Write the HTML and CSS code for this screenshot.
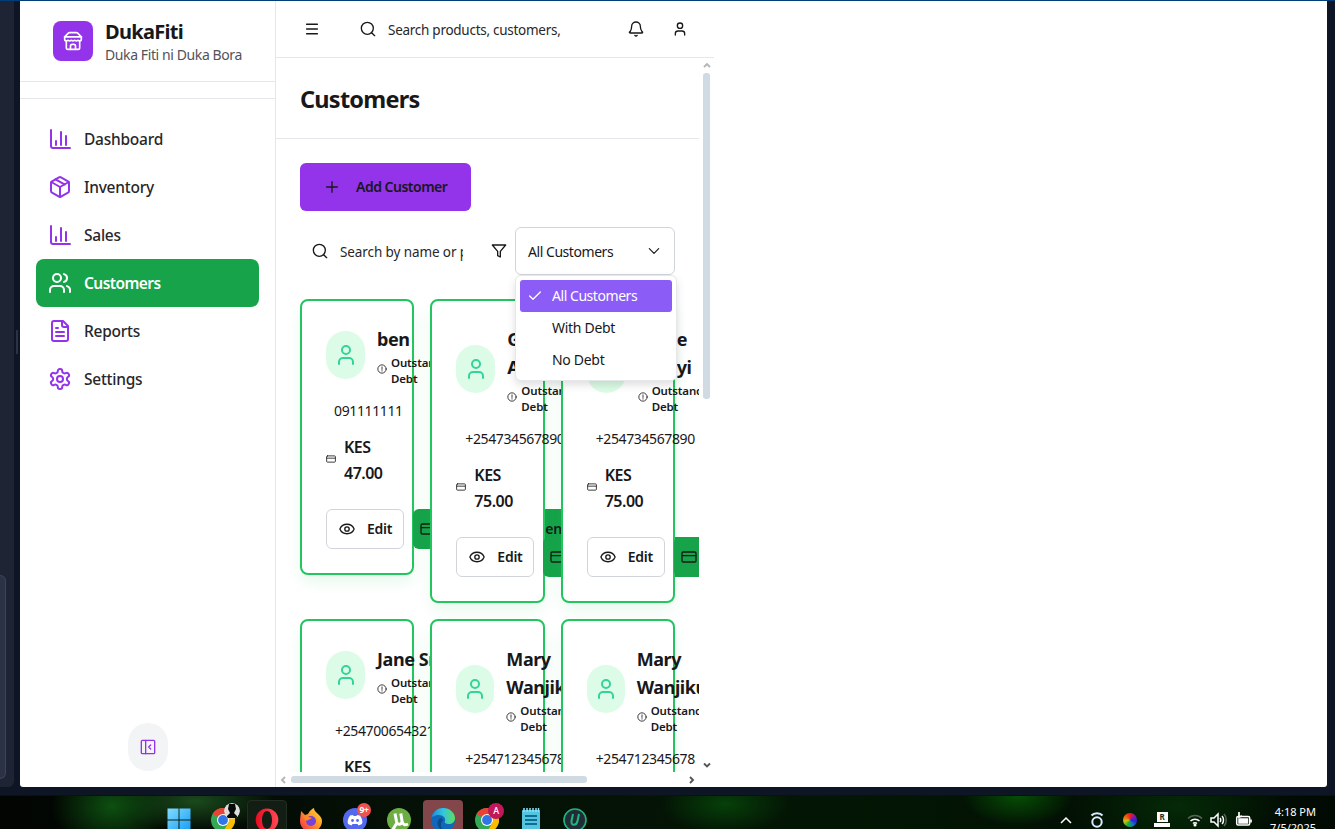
FILE: index.html
```
<!DOCTYPE html>
<html lang="en">
<head>
<meta charset="utf-8">
<title>DukaFiti - Customers</title>
<link rel="stylesheet" href="styles.css">
</head>
<body>
<svg width="0" height="0" class="defs">
  <defs>
    <symbol id="store" viewBox="0 0 24 24"><path d="m2 7 4.41-4.41A2 2 0 0 1 7.83 2h8.34a2 2 0 0 1 1.42.59L22 7"/><path d="M4 12v8a2 2 0 0 0 2 2h12a2 2 0 0 0 2-2v-8"/><path d="M15 22v-4a2 2 0 0 0-2-2h-2a2 2 0 0 0-2 2v4"/><path d="M2 7h20"/><path d="M22 7v3a2 2 0 0 1-2 2a2.7 2.7 0 0 1-1.59-.63.7.7 0 0 0-.82 0A2.7 2.7 0 0 1 16 12a2.7 2.7 0 0 1-1.59-.63.7.7 0 0 0-.82 0A2.7 2.7 0 0 1 12 12a2.7 2.7 0 0 1-1.59-.63.7.7 0 0 0-.82 0A2.7 2.7 0 0 1 8 12a2.7 2.7 0 0 1-1.59-.63.7.7 0 0 0-.82 0A2.7 2.7 0 0 1 4 12a2 2 0 0 1-2-2V7"/></symbol>
    <symbol id="chart" viewBox="0 0 24 24"><path d="M3 3v16a2 2 0 0 0 2 2h17"/><path d="M18 18V9"/><path d="M13 18V5"/><path d="M8 18v-4"/></symbol>
    <symbol id="package" viewBox="0 0 24 24"><path d="M11 21.73a2 2 0 0 0 2 0l7-4A2 2 0 0 0 21 16V8a2 2 0 0 0-1-1.73l-7-4a2 2 0 0 0-2 0l-7 4A2 2 0 0 0 3 8v8a2 2 0 0 0 1 1.73z"/><path d="M12 22V12"/><path d="m3.3 7 8.7 5 8.7-5"/><path d="m7.5 4.27 9 5.15"/></symbol>
    <symbol id="users" viewBox="0 0 24 24"><path d="M16 21v-2a4 4 0 0 0-4-4H6a4 4 0 0 0-4 4v2"/><circle cx="9" cy="7" r="4"/><path d="M22 21v-2a4 4 0 0 0-3-3.87"/><path d="M16 3.13a4 4 0 0 1 0 7.75"/></symbol>
    <symbol id="file" viewBox="0 0 24 24"><path d="M15 2H6a2 2 0 0 0-2 2v16a2 2 0 0 0 2 2h12a2 2 0 0 0 2-2V7Z"/><path d="M14 2v4a2 2 0 0 0 2 2h4"/><path d="M10 9H8"/><path d="M16 13H8"/><path d="M16 17H8"/></symbol>
    <symbol id="gear" viewBox="0 0 24 24"><path d="M12.22 2h-.44a2 2 0 0 0-2 2v.18a2 2 0 0 1-1 1.73l-.43.25a2 2 0 0 1-2 0l-.15-.08a2 2 0 0 0-2.73.73l-.22.38a2 2 0 0 0 .73 2.73l.15.1a2 2 0 0 1 1 1.72v.51a2 2 0 0 1-1 1.74l-.15.09a2 2 0 0 0-.73 2.73l.22.38a2 2 0 0 0 2.73.73l.15-.08a2 2 0 0 1 2 0l.43.25a2 2 0 0 1 1 1.73V20a2 2 0 0 0 2 2h.44a2 2 0 0 0 2-2v-.18a2 2 0 0 1 1-1.73l.43-.25a2 2 0 0 1 2 0l.15.08a2 2 0 0 0 2.73-.73l.22-.39a2 2 0 0 0-.73-2.73l-.15-.08a2 2 0 0 1-1-1.74v-.5a2 2 0 0 1 1-1.74l.15-.09a2 2 0 0 0 .73-2.73l-.22-.38a2 2 0 0 0-2.73-.73l-.15.08a2 2 0 0 1-2 0l-.43-.25a2 2 0 0 1-1-1.73V4a2 2 0 0 0-2-2z"/><circle cx="12" cy="12" r="3"/></symbol>
    <symbol id="panel" viewBox="0 0 24 24"><rect x="2" y="2" width="20" height="20" rx="1.5"/><path d="M8.500 2v20"/><path d="m16 15-3-3 3-3"/></symbol>
    <symbol id="menu" viewBox="0 0 24 24"><path d="M4 5h16M4 12h16M4 19h16"/></symbol>
    <symbol id="search" viewBox="0 0 24 24"><circle cx="11" cy="11" r="9"/><path d="m22 22-4.500-4.500"/></symbol>
    <symbol id="bell" viewBox="0 0 24 24"><path d="M10.3 21.500a2 2 0 0 0 3.4 0"/><path d="M3.300 15.800A1 1 0 0 0 3 18h18a1 1 0 0 0 0-2C19.400 14 18.500 12.500 18.500 8a6.500 6.500 0 0 0-13 0c0 4.500-1 6-2.200 7.800"/></symbol>
    <symbol id="user" viewBox="0 0 24 24"><path d="M19 21v-2a4 4 0 0 0-4-4H9a4 4 0 0 0-4 4v2"/><circle cx="12" cy="7" r="4"/></symbol>
    <symbol id="plus" viewBox="0 0 24 24"><path d="M4 12h16M12 4v16"/></symbol>
    <symbol id="filter" viewBox="0 0 24 24"><path d="M22 3H2l8 9.460V19l4 2v-8.540z"/></symbol>
    <symbol id="down" viewBox="0 0 24 24"><path d="m4 8 8 8 8-8"/></symbol>
    <symbol id="check" viewBox="0 0 24 24"><path d="M20 6 9 17l-5-5"/></symbol>
    <symbol id="alert" viewBox="0 0 24 24"><circle cx="12" cy="12" r="10"/><path d="M12 7v6M12 16v1"/></symbol>
    <symbol id="card" viewBox="0 0 24 24"><rect x="1.500" y="4.500" width="21" height="15" rx="2"/><path d="M2 10h20"/></symbol>
    <symbol id="eye" viewBox="0 0 24 24"><path d="M1.500 12.350a1 1 0 0 1 0-.7 11.300 10.750 0 0 1 21 0 1 1 0 0 1 0 .7 11.300 10.750 0 0 1-21 0"/><circle cx="12" cy="12" r="3.300"/></symbol>
    <symbol id="chrome" viewBox="0 0 24 24"><circle cx="12" cy="12" r="12" fill="#34a853"/><path d="M12 12 1.600 6A12 12 0 0 1 22.400 6z" fill="#ea4335"/><path d="M12 6h10.400A12 12 0 0 1 12 24l5.200-9z" fill="#fbbc04"/><circle cx="12" cy="12" r="6" fill="#fff"/><circle cx="12" cy="12" r="4.900" fill="#2f76e8"/></symbol>
    <linearGradient id="win" x2="1" y2="1"><stop stop-color="#82dcff"/><stop offset="1" stop-color="#149cf5"/></linearGradient>
    <linearGradient id="red" x2="1"><stop stop-color="#e80b20"/><stop offset="1" stop-color="#ff4a55"/></linearGradient>
    <linearGradient id="fox" x1="1" x2="0" y2="1"><stop stop-color="#ffe338"/><stop offset=".45" stop-color="#ff9525"/><stop offset="1" stop-color="#f3264f"/></linearGradient>
    <linearGradient id="edge" x2="1"><stop stop-color="#1d87dd"/><stop offset=".5" stop-color="#33c5df"/><stop offset="1" stop-color="#5ae05b"/></linearGradient>
  </defs>
</svg>

<div class="desktop">
  <div class="window">
    <div class="gutter"><div class="gutter-card"></div></div>
    <div class="divider"><span class="grip"></span></div>
    <div class="app">
      <aside class="sidebar">
        <div class="brand">
          <div class="logo"><svg class="ic i20"><use href="#store"/></svg></div>
          <div>
            <div class="brand-name">DukaFiti</div>
            <div class="brand-tag">Duka Fiti ni Duka Bora</div>
          </div>
        </div>
        <div class="strip"></div>
        <nav class="nav">
          <a class="nav-item"><svg class="ic i24"><use href="#chart"/></svg>Dashboard</a>
          <a class="nav-item"><svg class="ic i24"><use href="#package"/></svg>Inventory</a>
          <a class="nav-item"><svg class="ic i24"><use href="#chart"/></svg>Sales</a>
          <a class="nav-item active"><svg class="ic i24"><use href="#users"/></svg>Customers</a>
          <a class="nav-item"><svg class="ic i24"><use href="#file"/></svg>Reports</a>
          <a class="nav-item"><svg class="ic i24"><use href="#gear"/></svg>Settings</a>
        </nav>
        <button class="collapse"><svg class="ic i16"><use href="#panel"/></svg></button>
      </aside>

      <main class="main">
        <header class="topbar">
          <svg class="ic i16 menu-ic"><use href="#menu"/></svg>
          <svg class="ic i16 search-ic"><use href="#search"/></svg>
          <span class="placeholder top-ph">Search products, customers,</span>
          <svg class="ic i16 bell-ic"><use href="#bell"/></svg>
          <svg class="ic i16"><use href="#user"/></svg>
        </header>
        <div class="scroller">
          <section class="view">
            <div class="title-row"><h1>Customers</h1></div>
            <div class="content">
              <button class="add"><svg class="ic i16"><use href="#plus"/></svg>Add Customer</button>
              <div class="filters">
                <div class="search-box"><svg class="ic i16"><use href="#search"/></svg><span class="placeholder cut">Search by name or phone</span></div>
                <svg class="ic i16 funnel"><use href="#filter"/></svg>
                <div class="select">
                  <span>All Customers</span><svg class="ic i14"><use href="#down"/></svg>
                  <div class="dropdown">
                    <div class="option chosen"><svg class="ic i16"><use href="#check"/></svg>All Customers</div>
                    <div class="option">With Debt</div>
                    <div class="option">No Debt</div>
                  </div>
                </div>
              </div>
              <div class="cards" id="cards"></div>
            </div>
          </section>
          <div class="vbar">
            <svg class="arrow dim" viewBox="0 0 8 6"><path d="M1 5 4 2l3 3"/></svg>
            <span class="vthumb"></span>
            <svg class="arrow" viewBox="0 0 8 6"><path d="M1 1.500 4 4.500 7 1.500"/></svg>
          </div>
          <div class="hbar">
            <svg class="harrow dim" viewBox="0 0 6 8"><path d="M5 1 2 4l3 3"/></svg>
            <span class="hthumb"></span>
            <svg class="harrow" viewBox="0 0 6 8"><path d="m1 1 3 3-3 3"/></svg>
          </div>
        </div>
      </main>
    </div>
  </div>

  <footer class="taskbar">
    <div class="apps">
      <div class="tile"><svg class="app-ic" viewBox="0 0 24 24" fill="url(#win)"><path d="M.5.5h11v11H.5zM12.500.5h11v11h-11zM.5 12.500h11v11H.5zM12.500 12.500h11v11h-11z"/></svg></div>
      <div class="tile"><svg class="app-ic"><use href="#chrome"/></svg><svg class="badge" viewBox="0 0 16 16"><circle cx="8" cy="8" r="8" fill="#ddd"/><path d="M5 1h6l1 5-2 4 3 3v2H3v-2l3-3-2-4z" fill="#080808"/></svg></div>
      <div class="tile running"><svg class="app-ic" viewBox="0 0 24 24"><path fill="url(#red)" fill-rule="evenodd" d="M12 .5A11.300 11.500 0 1 0 12 23.500 11.300 11.500 0 1 0 12 .5m0 2.500c3 0 5 4 5 9s-2 9-5 9-5-4-5-9 2-9 5-9"/></svg></div>
      <div class="tile"><svg class="app-ic" viewBox="0 0 24 24"><path fill="url(#fox)" d="M2 3l4 4 3-1c2-4 4-5 6-6 0 3 2 4 5 7 2 2 3 4 3 6a11 11 0 0 1-22 0c0-4 1-7 1-10"/><circle cx="12" cy="13" r="5" fill="#7543d8"/><path d="M4 9c4-2 6 0 9 1-2 2-4 1-5 3" fill="#ff8a1f"/></svg></div>
      <div class="tile"><svg class="app-ic" viewBox="0 0 24 24"><circle cx="12" cy="12" r="12" fill="#5468ee"/><path d="M7 7.500 10 7l.5 1h3l.5-1 3 .5c2 3 3 6 2 8.500l-3.500 1.500-1-1.500h-5l-1 1.500L5 16c-1-2.500 0-5.500 2-8.500" fill="#fff"/><circle cx="9.500" cy="12.500" r="1.400" fill="#5468ee"/><circle cx="14.500" cy="12.500" r="1.400" fill="#5468ee"/></svg><span class="badge count">9+</span></div>
      <div class="tile"><svg class="app-ic" viewBox="0 0 24 24"><circle cx="12" cy="12" r="12" fill="#6cae43"/><path d="M8 5.500l1.500 8c1 4 5.500 3.500 5.500-.5l-1.200-7.500M15 13c1 4 3 4.500 6 3M9.500 15.500 5 23" stroke="#fff" stroke-width="3" fill="none"/></svg></div>
      <div class="tile focused"><svg class="app-ic" viewBox="0 0 24 24"><circle cx="12" cy="12" r="12" fill="#1268b8"/><path fill="url(#edge)" d="M.3 10C2 3 7 0 12 0c7 0 12 5 12 10 0 4-3 6-6 6-3 0-5-1-4-3 1-3-2-6-6-6-4 0-7 2-7.700 3"/><path d="M8 11c-4 6 1 12 7 12-5-1-7-7-3-11-1-2-3-2-4-1" fill="#0b4a8b"/></svg></div>
      <div class="tile"><svg class="app-ic"><use href="#chrome"/></svg><span class="badge letter">A</span></div>
      <div class="tile"><svg class="app-ic" viewBox="0 0 24 24"><rect x="3" y="2" width="18" height="22" rx="1" fill="#55c4e0"/><path d="M5 0v4M8 0v4M11 0v4M14 0v4M17 0v4M19.500 0v4" stroke="#8be4f5" stroke-width="1.500"/><path d="M6 8h12M6 12h12M6 16h12" stroke="#0e6e91" stroke-width="1.800"/><path d="M3 21h18v3H3z" fill="#e8edf0"/></svg></div>
      <div class="tile"><svg class="app-ic" viewBox="0 0 24 24"><circle cx="12" cy="12" r="11" fill="#222b38" stroke="#1fb57a" stroke-width="1.600"/><path d="M10 6 8.500 13c-.8 5 5 5 6 0L16 6" fill="none" stroke="#20b77d" stroke-width="2"/></svg></div>
    </div>
    <div class="tray">
      <svg class="tray-ic chev" viewBox="0 0 16 16"><path d="m3 11 5-5 5 5"/></svg>
      <svg class="tray-ic ring" viewBox="0 0 16 16"><circle cx="8" cy="10" r="4.700"/><path d="M2.500 3.500c2.500-3 8.500-3 11 0"/></svg>
      <span class="wheel"></span>
      <span class="rbox"><b>R</b></span>
      <svg class="tray-ic wifi" viewBox="0 0 16 16"><path d="M1 6.500c4-4 10-4 14 0" stroke="#56645a"/><path d="M3.500 9c2.500-2.500 6.500-2.500 9 0M6 11.500c1-1 3-1 4 0"/><circle cx="8" cy="13" r=".8" fill="#fff"/></svg>
      <svg class="tray-ic spk" viewBox="0 0 16 16"><path d="M1 6h3l4-4v12l-4-4H1zM10 6c1 1 1 3 0 4M12 4c2 2 2 6 0 8"/><path d="M14 2c3 3 3 9 0 12" stroke="#56645a"/></svg>
      <svg class="tray-ic bat" viewBox="0 0 16 16"><rect x=".7" y="4.500" width="13" height="8.500" rx="1.500"/><path d="M3 7h8.500v4H3z" fill="#fff"/><path d="M15 7.500v3M3 0v5l3-1" stroke-width="1.700"/></svg>
      <div class="clock"><div>4:18 PM</div><div>7/5/2025</div></div>
    </div>
  </footer>
</div>
<script src="cards.js"></script>
</body>
</html>
```
FILE: styles.css
```
* { box-sizing: border-box; }
body { margin: 0; overflow: hidden; background: #0d1424; color: #18181b; font-family: "Noto Sans", "Open Sans", sans-serif; font-size: 14px; }
button { font: inherit; color: inherit; border: 0; padding: 0; }
.defs { position: absolute; }
.ic { flex: none; fill: none; stroke: currentColor; stroke-width: 2; stroke-linecap: round; stroke-linejoin: round; }
.i14 { width: 14px; height: 14px; }
.i16 { width: 16px; height: 16px; }
.i20 { width: 20px; height: 20px; }
.i24 { width: 24px; height: 24px; }

.desktop { display: flex; flex-direction: column; width: 1335px; height: 829px; overflow: hidden; }
.window { display: flex; height: 795px; padding: 0 8px 8px 0; background: #0e1525; border-top: 1px solid #003d7a; flex: none; }
.gutter { width: 14px; background: #1e2433; border-radius: 0 0 6px 0; display: flex; align-items: flex-end; padding-bottom: 8px; }
.gutter-card { width: 6px; height: 204px; background: #2b3245; border: 1px solid #3c445a; border-left: 0; border-radius: 0 6px 6px 0; }
.divider { width: 6px; padding: 329px 2px 0; }
.grip { display: block; width: 2px; height: 24px; background: #2b3245; }
.app { display: flex; flex: 1; background: #fff; border-radius: 0 0 3px 3px; }

.sidebar { width: 256px; border-right: 1px solid #e5e7eb; display: flex; flex-direction: column; }
.brand { height: 81px; display: flex; align-items: center; gap: 12px; padding-left: 33px; border-bottom: 1px solid #e5e7eb; }
.logo { width: 40px; height: 40px; border-radius: 8px; background: #9333ea; color: #fff; display: grid; place-items: center; }
.brand-name { font-size: 20px; font-weight: 700; line-height: 25px; letter-spacing: -.7px; }
.brand-tag { font-size: 14px; line-height: 20px; padding-top: 1px; margin-bottom: -1px; color: #52525b; letter-spacing: -.4px; }
.strip { height: 17px; border-bottom: 1px solid #e5e7eb; }
.nav { padding: 16px; flex: 1; }
.nav-item { display: flex; align-items: center; gap: 12px; height: 48px; padding-left: 12px; border-radius: 8px; font-size: 15.500px; font-weight: 500; color: #27272a; letter-spacing: -.25px; }
.nav-item .ic { color: #9333ea; }
.nav-item.active { background: #16a34a; color: #fff; font-weight: 600; letter-spacing: -.55px; }
.nav-item.active .ic { color: #fff; }
.collapse { width: 40px; height: 48px; border-radius: 20px; margin: 0 auto 16px; background: #f3f4f6; color: #9333ea; display: grid; place-items: center; }

.main { width: 438px; display: flex; flex-direction: column; }
.topbar { height: 57px; border-bottom: 1px solid #e5e7eb; display: flex; align-items: center; padding-left: 28px; }
.menu-ic { margin-right: 40px; stroke-width: 2.300; }
.search-ic { margin-right: 12px; }
.placeholder { font-size: 13.500px; line-height: 20px; padding-top: 2px; letter-spacing: -.27px; white-space: nowrap; overflow: hidden; color: #27272a; }
.top-ph { width: 240px; }
.bell-ic { margin-right: 28px; }
.scroller { display: grid; grid-template: 714px 15px / 423px 15px; }
.view { overflow: hidden; }
.title-row { height: 81px; padding: 22px 24px; border-bottom: 1px solid #e5e7eb; }
h1 { margin: 0; font-size: 23.500px; line-height: 38px; font-weight: 700; letter-spacing: -.75px; }
.content { padding: 24px; }
.add { display: flex; align-items: center; gap: 16px; width: 171px; height: 48px; padding: 0 0 1px 24px; border-radius: 6px; background: #9333ea; font-weight: 600; letter-spacing: -.5px; }
.filters { display: flex; align-items: center; height: 48px; margin-top: 16px; }
.search-box { display: flex; align-items: center; gap: 12px; width: 163px; padding-left: 12px; }
.cut { width: 123px; letter-spacing: -.1px; }
.funnel { margin: 0 8px 0 28px; }
.select { position: relative; flex: none; width: 160px; height: 48px; border: 1px solid #d1d5db; border-radius: 6px; padding: 0 13px 0 12px; display: flex; align-items: center; justify-content: space-between; letter-spacing: -.45px; }
.dropdown { position: absolute; z-index: 20; left: -1px; top: 47px; width: 162px; height: 106px; padding: 4px; background: #fff; border: 1px solid #e5e7eb; border-radius: 6px; box-shadow: 0 4px 8px rgba(0,0,0,.13); }
.option { height: 32px; display: flex; align-items: center; padding: 0 0 1px 32px; border-radius: 3px; letter-spacing: -.3px; }
.option.chosen { background: #8b5cf6; color: #fff; padding-left: 7px; gap: 9px; letter-spacing: -.45px; }

.cards { display: grid; grid-template-columns: repeat(3, minmax(0, 1fr)); gap: 16px; align-items: start; margin-top: 24px; }
.card { position: relative; height: 304px; padding: 24px; background: #fff; border: 2px solid #22c55e; border-radius: 8px; box-shadow: 0 8px 16px -2px rgba(34,197,94,.12); }
.card.short { height: 276px; }
.who { display: flex; align-items: center; gap: 12px; }
.avatar { width: 39px; height: 48px; flex: none; border-radius: 20px; background: #dcfce7; color: #34d399; display: grid; place-items: center; }
.avatar.narrow { width: 38px; }
.name { font-size: 18px; line-height: 28px; font-weight: 700; letter-spacing: -.42px; white-space: pre; }
.status { display: flex; align-items: center; gap: 4px; font-size: 11.500px; line-height: 16px; font-weight: 600; letter-spacing: -.15px; }
.status span { padding-top: 2px; margin-bottom: -2px; }
.status .ic { width: 10px; height: 10px; }
.phone { margin: 16px 0 13px 8px; line-height: 20px; letter-spacing: -.38px; white-space: nowrap; }
.phone.intl { margin-left: 9px; }
.debt { display: flex; align-items: center; gap: 8px; font-size: 16px; line-height: 26px; font-weight: 600; letter-spacing: -.5px; }
.debt .ic { width: 10px; height: 10px; margin-top: -2px; }
.actions { display: flex; gap: 9px; margin-top: 23px; }
.edit, .record { flex: none; height: 40px; display: flex; align-items: center; gap: 12px; padding-bottom: 1px; border-radius: 6px; font-weight: 600; white-space: nowrap; letter-spacing: -.25px; }
.edit { width: 78px; padding-left: 12px; background: #fff; border: 1px solid #d1d5db; }
.record { width: 168px; padding-left: 7px; gap: 23px; background: #16a34a; }

.vbar { display: flex; flex-direction: column; align-items: center; padding: 4px 0; }
.arrow { width: 8px; height: 6px; }
.harrow { width: 6px; height: 8px; }
.arrow, .harrow { fill: none; stroke: #555; stroke-width: 1.900; }
.arrow.dim, .harrow.dim { stroke: #b5b5b5; }
.vthumb { width: 7px; height: 326px; margin: 5px 0 auto; border-radius: 3px; background: #d0dae3; }
.hbar { display: flex; align-items: center; padding: 0 4px; }
.hthumb { width: 296px; height: 7px; margin: 0 auto 0 5px; border-radius: 3px; background: #d0dae3; }

.taskbar { height: 34px; flex: none; border-top: 1px solid #071020; display: flex; justify-content: space-between; padding: 4px 19px 0 158px; background: radial-gradient(ellipse 60px 45px at 112px 10px, #0d5010, transparent), radial-gradient(ellipse 80px 30px at 195px 5px, #1b4a1c, transparent), radial-gradient(ellipse 65px 30px at 725px 8px, #064009, transparent), radial-gradient(ellipse 55px 30px at 1018px 0, #064d05, transparent), radial-gradient(ellipse 110px 50px at 1180px 10px, #052a07, transparent), linear-gradient(90deg, #020502, #051006 30%, #031604 65%, #010a02); }
.apps { display: flex; gap: 4px; padding-left: 1px; }
.tile { position: relative; flex: none; width: 40px; height: 40px; border-radius: 4px; display: grid; place-items: center; }
.running { background: #121d14; border: 1px solid #222d24; }
.focused { background: #82464b; }
.app-ic { width: 24px; height: 24px; }
.badge { position: absolute; left: 21px; top: 3px; width: 16px; height: 16px; border-radius: 8px; }
.count, .letter { font: 700 9px/15px "Noto Sans", sans-serif; text-align: center; color: #fff; letter-spacing: -.3px; }
.count { width: 14px; height: 14px; left: 22px; background: #f0524f; font-size: 8.500px; line-height: 14px; }
.letter { background: #c2185b; font-weight: 500; }
.tray { display: flex; align-items: flex-start; padding-top: 12px; color: #fff; }
.tray-ic { width: 16px; height: 16px; fill: none; stroke: #fff; stroke-width: 1.500; margin-right: 15px; overflow: visible; }
.ring { stroke: #dce8ff; margin-right: 18px; stroke-width: 2; }
.wheel { width: 14px; height: 14px; border-radius: 50%; margin: 1px 17px 0 0; background: conic-gradient(#f21c1c, #8217b0, #2525d8, #1580b0, #18b030, #c5c510, #ee6010, #f21c1c); }
.rbox { width: 16px; height: 15px; margin: 0 17px 0 0; background: linear-gradient(#fff, #fff) center top / 11px 10px no-repeat, linear-gradient(#fff, #fff) center bottom / 16px 4px no-repeat; color: #14301a; text-align: center; }
.rbox b { display: block; font-size: 8px; line-height: 10px; }
.wifi { margin-right: 7px; }
.spk { margin-right: 10px; }
.bat { margin-right: 14px; }
.clock { width: 50px; margin-top: -8px; font-size: 11px; line-height: 16px; text-align: right; white-space: nowrap; }
```
FILE: cards.js
```
const customers = [
  { name: "ben", phone: "091111111", debt: "47.00", short: true },
  { name: "Grace\nAkinyi", phone: "+254734567890", debt: "75.00" },
  { name: "Grace\nAkinyi", phone: "+254734567890", debt: "75.00" },
  { name: "Jane Smith", phone: "+254700654321", debt: "50.00", short: true },
  { name: "Mary\nWanjiku", phone: "+254712345678", debt: "25.00" },
  { name: "Mary\nWanjiku", phone: "+254712345678", debt: "25.00" }
];
const icon = (id, size) => `<svg class="ic ${size || ""}"><use href="#${id}"/></svg>`;
document.getElementById("cards").innerHTML = customers.map(c => `
  <article class="card ${c.short ? "short" : ""}">
    <div class="who">
      <div class="avatar ${c.name.startsWith("Mary") ? "narrow" : ""}">${icon("user", "i24")}</div>
      <div>
        <div class="name">${c.name}</div>
        <div class="status">${icon("alert")}<span>Outstanding<br>Debt</span></div>
      </div>
    </div>
    <div class="phone ${c.phone[0] === "+" ? "intl" : ""}">${c.phone}</div>
    <div class="debt">${icon("card")}<span>KES<br>${c.debt}</span></div>
    <div class="actions">
      <button class="edit">${icon("eye", "i16")}Edit</button>
      <button class="record">${icon("card", "i16")}Record Payment</button>
    </div>
  </article>`).join("");
```
